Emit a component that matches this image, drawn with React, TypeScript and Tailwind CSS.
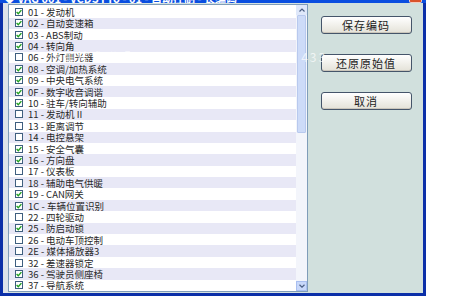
import React from 'react';

const rows: [string, string, boolean][] = [
    ['01', '发动机', true],
    ['02', '自动变速箱', true],
    ['03', 'ABS制动', true],
    ['04', '转向角', true],
    ['06', '外灯侧光器', false],
    ['08', '空调/加热系统', true],
    ['09', '中央电气系统', true],
    ['0F', '数字收音调谐', true],
    ['10', '驻车/转向辅助', true],
    ['11', '发动机 II', false],
    ['13', '距离调节', false],
    ['14', '电控悬架', false],
    ['15', '安全气囊', true],
    ['16', '方向盘', true],
    ['17', '仪表板', false],
    ['18', '辅助电气供暖', false],
    ['19', 'CAN网关', true],
    ['1C', '车辆位置识别', true],
    ['22', '四轮驱动', false],
    ['25', '防启动锁', true],
    ['26', '电动车顶控制', false],
    ['2E', '媒体播放器3', false],
    ['32', '差速器锁定', false],
    ['36', '驾驶员侧座椅', true],
    ['37', '导航系统', true],
];

function Check({ on }: { on: boolean }) {
    return (
        <span className="w-[8px] h-[8px] border border-[#3f5f7f] bg-white flex items-center justify-center shrink-0">
            {on && (
                <svg width="6" height="6" viewBox="0 0 6 6">
                    <path d="M0.6 3 L2.3 4.7 L5.4 1.1" stroke="#21a121" strokeWidth="1.4" fill="none" />
                </svg>
            )}
        </span>
    );
}

function Button({ label }: { label: string }) {
    return (
        <button className="w-[91px] h-[18px] rounded-[3px] border border-[#45556a] bg-gradient-to-b from-[#ffffff] to-[#e4e2d8] text-[11px] text-[#222] leading-none tracking-[1px] shadow-[inset_0_-1px_0_#cbc6bb]">
            {label}
        </button>
    );
}

export default function App() {
    return (
        <div className="w-[460px] h-[298px] bg-white" style={{ fontFamily: '"Noto Sans CJK SC", "Liberation Sans", sans-serif' }}>
            <div className="w-[426px] h-[296px] flex flex-col">
                {/* title bar, mostly off screen */}
                <div className="h-[7px] overflow-hidden bg-[#0a4ee0] flex items-end justify-between pr-[4px]">
                    <span className="text-white font-bold text-[11px] leading-[11px] -mb-[1px] pl-[4px] whitespace-nowrap">◆ VAG 001 - VCDS Pro - 01 - 自动控制 - 长编码</span>
                    <span className="w-[13px] h-[6px] bg-[#d9532c] rounded-b-[2px] border border-white/70 border-t-0" />
                </div>
                <div className="flex-1 flex border-l-[3px] border-r-[3px] border-b-[3px] border-[#0b2fa8] bg-[#d6e2e0]">
                    <div className="w-[5px] bg-[#dde3ea]" />
                    <div className="w-[300px] mt-[1px] mb-[1px] border border-[#7f9db9] bg-white flex">
                        <div className="flex-1 flex flex-col pt-[1px] relative">
                            {rows.map(([code, name, on], i) => (
                                <div
                                    key={code}
                                    className={`h-[11.4px] overflow-hidden flex items-center gap-[5px] pl-[6px] text-[9.5px] leading-[10px] text-[#2a2a2a] whitespace-nowrap ${i % 2 === 1 ? 'bg-[#e8e8f6]' : 'bg-white'}`}
                                >
                                    <Check on={on} />
                                    <span>{code} - {name}</span>
                                </div>
                            ))}
                            <span className="absolute left-[40px] top-[46px] text-[12px] leading-[12px] text-white/70 tracking-[2px] whitespace-nowrap pointer-events-none">汽车技术联盟网 · · · · · · · · 433</span>
                        </div>
                        <div className="w-[11px] bg-[#f3f5fb] flex flex-col">
                            <div className="h-[10px] bg-[#dfe8fa] flex items-center justify-center">
                                <svg width="6" height="4" viewBox="0 0 6 4"><path d="M0.5 3.5 L3 1 L5.5 3.5" stroke="#4d6185" strokeWidth="1.2" fill="none" /></svg>
                            </div>
                            <div className="h-[118px] mx-[1px] bg-[#cddbf8] border border-[#b8c9ee] rounded-[1px]" />
                            <div className="flex-1" />
                            <div className="h-[10px] bg-[#c8d8fa] border border-[#a9bff0] flex items-center justify-center">
                                <svg width="6" height="4" viewBox="0 0 6 4"><path d="M0.5 0.8 L3 3.2 L5.5 0.8" stroke="#4d6185" strokeWidth="1.2" fill="none" /></svg>
                            </div>
                        </div>
                    </div>
                    <div className="flex-1 flex flex-col items-center pt-[13px] pl-[1px] gap-[20px] bg-[#d1e0dd]">
                        <Button label="保存编码" />
                        <Button label="还原原始值" />
                        <Button label="取消" />
                    </div>
                </div>
            </div>
        </div>
    );
}
